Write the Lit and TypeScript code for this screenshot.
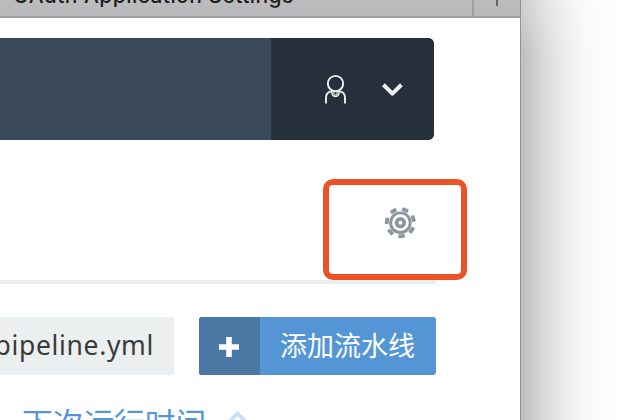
import { LitElement, html, css, svg } from "lit";
import { customElement } from "lit/decorators.js";

const teeth = [0, 1, 2, 3, 4, 5, 6].map((i) => 175 + (i * 360) / 7);

@customElement("app-root")
export class AppRoot extends LitElement {
  static styles = css`
    :host {
      display: flex;
      width: 620px;
      height: 420px;
      overflow: hidden;
      background: #fff;
      font-family: "Noto Sans", "Noto Sans CJK SC", sans-serif;
    }
    * { box-sizing: border-box; }
    svg { display: block; flex: none; }
    .window {
      width: 521px;
      height: 420px;
      flex: none;
      overflow: hidden;
      border-right: 1px solid #929394;
    }
    .desktop {
      flex: 1;
      background:
        linear-gradient(to bottom, rgba(255, 255, 255, 0.28), rgba(255, 255, 255, 0) 60px),
        linear-gradient(to right, #bdbdbd 0, #c3c3c3 6px, #cecece 14px, #dadada 24px, #e5e5e5 36px, #f0f0f0 50px, #f8f8f8 63px, #fcfcfc 78px, #fff 96px);
    }
    .tabs {
      display: flex;
      height: 18px;
      background: linear-gradient(#bcbcbe, #b8b8ba);
      border-bottom: 2px solid #a0a0a0;
      overflow: hidden;
    }
    .tab {
      width: 474px;
      height: 16px;
      flex: none;
      padding-left: 13px;
      border-right: 2px solid #a0a0a1;
      overflow: hidden;
    }
    .title {
      display: block;
      margin-top: -18px;
      font: 500 21px/28px Inter, sans-serif;
      letter-spacing: 0.45px;
      color: #1d1d1e;
      white-space: nowrap;
    }
    .newtab { width: 2px; height: 6px; margin-left: 22px; background: #656566; }
    .header {
      display: flex;
      width: 434px;
      height: 102px;
      margin-top: 20px;
      border-radius: 0 6px 6px 0;
      overflow: hidden;
      background: #3a495a;
    }
    .account {
      display: flex;
      width: 163px;
      margin-left: auto;
      padding: 36px 0 0 52px;
      gap: 32px;
      background: #26303b;
    }
    .chev { margin-top: 9px; }
    .toolbar {
      position: relative;
      width: 436px;
      height: 144px;
      border-bottom: 4px solid #ebefef;
      padding: 66px 0 0 384px;
    }
    .highlight {
      position: absolute;
      left: 323px;
      top: 39px;
      width: 144px;
      height: 101px;
      border: 6px solid #ec5127;
      border-radius: 10px;
    }
    .actions {
      display: flex;
      width: 436px;
      height: 58px;
      margin-top: 33px;
      justify-content: space-between;
    }
    .file {
      display: flex;
      justify-content: flex-end;
      width: 174px;
      padding-right: 20px;
      overflow: hidden;
      background: #ebefef;
      border-radius: 0 3px 3px 0;
      color: #3a3a3a;
      font-size: 26.5px;
      line-height: 57px;
      letter-spacing: 0.65px;
      white-space: nowrap;
    }
    .add {
      display: flex;
      width: 237px;
      padding: 0;
      border: 0;
      border-radius: 3px;
      overflow: hidden;
      background: #5496d5;
      color: #fff;
      font: 27px/56px "Noto Sans CJK SC", sans-serif;
      white-space: nowrap;
    }
    .plus {
      display: flex;
      align-items: center;
      justify-content: center;
      width: 61px;
      height: 58px;
      padding: 2px 2px 0 0;
      background: #4a77a3;
    }
    .label { margin-left: 20px; }
    .sort {
      display: flex;
      height: 45px;
      padding-left: 22px;
      color: #5496d5;
      font: 30.7px/46px "Noto Sans CJK SC", sans-serif;
      margin-top: 24px;
      white-space: nowrap;
    }
    .when { width: 205px; }
    .caret { margin-top: 11px; }
  `;

  render() {
    return html`
      <main class="window">
        <div class="tabs">
          <div class="tab"><span class="title">OAuth Application Settings</span></div>
          <div class="newtab"></div>
        </div>
        <div class="header">
          <div class="account">
            <svg width="26" height="32" viewBox="0 0 26 32" fill="none" stroke="#eef1f2" stroke-width="1.9">
              <circle cx="12.5" cy="9.6" r="7.7" />
              <path d="M3 29.5V24Q3 17.6 9.2 17.4M15.8 17.4Q22 17.6 22 24V29.5" />
              <path d="M8.9 17Q8.6 22.6 12.5 22.6T16.1 17" stroke-width="1.4" />
              <ellipse cx="12.5" cy="19.2" rx="1.7" ry="2" stroke-width="1.1" />
            </svg>
            <svg class="chev" width="22" height="16" viewBox="0 0 22 16" fill="none" stroke="#eef1f2" stroke-width="4" stroke-linejoin="round">
              <path d="M2.4 1.8L11.4 10.6L20.4 1.8" />
            </svg>
          </div>
        </div>
        <div class="toolbar">
          <svg width="33" height="33" viewBox="0 0 33 33" fill="none" stroke="#8b969c">
            <circle cx="16.4" cy="16.7" r="9.8" stroke-width="2.9" />
            <circle cx="16.4" cy="16.7" r="3.8" stroke-width="3.7" />
            ${teeth.map((a) => svg`<path d="M13.2 3.2H19.6" stroke-width="3.8" transform="rotate(${a} 16.4 16.7)" />`)}
          </svg>
          <div class="highlight"></div>
        </div>
        <div class="actions">
          <div class="file">pipeline.yml</div>
          <button class="add">
            <span class="plus">
              <svg width="20" height="20" viewBox="0 0 20 20" fill="#fff"><path d="M7.2 0h5.6v7.2H20v5.6h-7.2V20H7.2v-7.2H0V7.2h7.2z" /></svg>
            </span>
            <span class="label">添加流水线</span>
          </button>
        </div>
        <div class="sort">
          <span class="when">下次运行时间</span>
          <svg class="caret" width="22" height="20" viewBox="0 0 22 20" fill="none" stroke="#cbdff4" stroke-width="3.8"><path d="M1 13L10.5 3.5L20 13" /></svg>
        </div>
      </main>
      <div class="desktop"></div>
    `;
  }
}
